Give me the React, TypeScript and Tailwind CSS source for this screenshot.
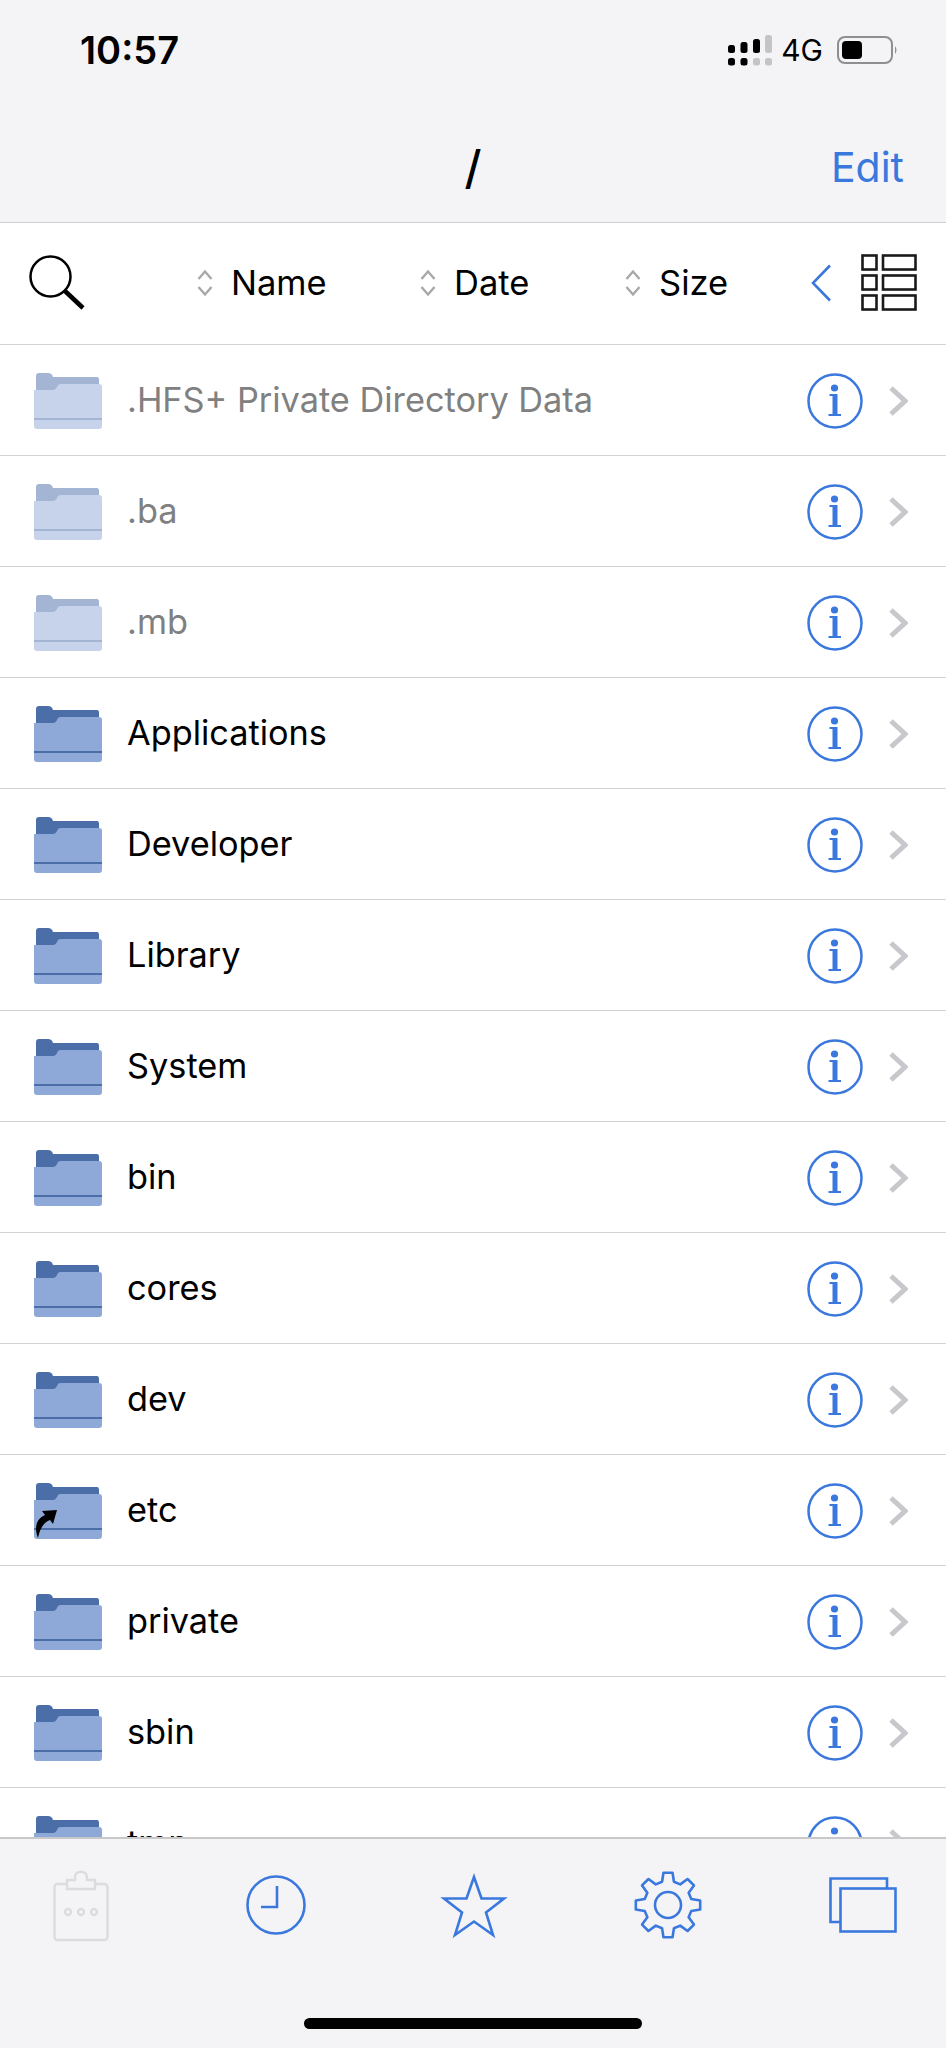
import React from "react";

const BLUE = "#3b78dd";

type Entry = { name: string; dim?: boolean; alias?: boolean };

const ENTRIES: Entry[] = [
  { name: ".HFS+ Private Directory Data", dim: true },
  { name: ".ba", dim: true },
  { name: ".mb", dim: true },
  { name: "Applications" },
  { name: "Developer" },
  { name: "Library" },
  { name: "System" },
  { name: "bin" },
  { name: "cores" },
  { name: "dev" },
  { name: "etc", alias: true },
  { name: "private" },
  { name: "sbin" },
  { name: "tmp" },
];

function FolderIcon({ dim, alias }: { dim?: boolean; alias?: boolean }) {
  return (
    <svg width="68" height="58" viewBox="0 0 68 58" className={dim ? "mt-[2px] shrink-0 opacity-50" : "mt-[2px] shrink-0"}>
      <path d="M2 3Q2 0 5 0H14Q18 0 19 4H63Q65 4 65 7V20H2Z" fill="#4c6ea8" />
      <path d="M0 17H19Q22 17 24 12Q25 11 27 11H65Q68 11 68 14V53Q68 56 65 56H3Q0 56 0 53Z" fill="#8ea9d8" />
      <rect x="0" y="45" width="68" height="2" fill="#4c6ea8" />
      {alias && <path d="M4 55C0 45 2 36 11 32L8 28L23 27L19 41L16 37C10 39 6 45 4 55Z" fill="#000" />}
    </svg>
  );
}

function InfoIcon() {
  return (
    <svg width="56" height="56" viewBox="0 0 56 56" className="shrink-0">
      <circle cx="28" cy="28" r="26.5" fill="none" stroke={BLUE} strokeWidth="2.5" />
      <circle cx="27.5" cy="15" r="3.6" fill={BLUE} />
      <path d="M22.5 21H30.5V41H34V43H21.5V41H25.5V23H22.5Z" fill={BLUE} />
    </svg>
  );
}

function Chevron() {
  return (
    <svg width="20" height="32" viewBox="0 0 20 32" className="shrink-0">
      <path d="M3 3L17 16L3 29" fill="none" stroke="#c8c8cc" strokeWidth="5" />
    </svg>
  );
}

function SortCaret() {
  return (
    <svg width="18" height="28" viewBox="0 0 18 28" className="shrink-0">
      <path d="M2.5 10L9 2.5L15.5 10M2.5 18L9 25.5L15.5 18" fill="none" stroke="#a8a8a8" strokeWidth="2.4" />
    </svg>
  );
}

function SortButton({ label, width }: { label: string; width: string }) {
  return (
    <div className={`flex items-center gap-[17px] ${width}`}>
      <SortCaret />
      <span className="mt-[2px] text-[34.5px] leading-none text-black">{label}</span>
    </div>
  );
}

function SearchIcon() {
  return (
    <svg width="56" height="56" viewBox="0 0 56 56" className="shrink-0">
      <circle cx="21.5" cy="21.5" r="20" fill="none" stroke="#000" strokeWidth="2.5" />
      <path d="M36 36L54 53" stroke="#000" strokeWidth="4.5" />
    </svg>
  );
}

function ListToggleIcon() {
  const rows = [1.5, 21.5, 41.5];
  return (
    <svg width="56" height="57" viewBox="0 0 56 57" className="shrink-0">
      {rows.map((y) => (
        <g key={y} fill="none" stroke="#1a1a1a" strokeWidth="2.6">
          <rect x="1.5" y={y} width="14" height="14" />
          <rect x="22" y={y} width="32.5" height="14" />
        </g>
      ))}
    </svg>
  );
}

function SignalIcon() {
  const top: [number, number][] = [[0, 10], [12.5, 7], [25, 4], [37, 0]];
  return (
    <svg width="44" height="31" viewBox="0 0 44 31" className="shrink-0">
      {top.map(([x, y], i) => (
        <rect key={x} x={x} y={y} width="7" height={18 - y} rx="2.5" fill={i === 3 ? "#c4c4c6" : "#000"} />
      ))}
      {top.map(([x], i) => (
        <rect key={x} x={x} y="23" width="7" height="7.5" rx="2.5" fill={i < 2 ? "#000" : "#c4c4c6"} />
      ))}
    </svg>
  );
}

function BatteryIcon() {
  return (
    <svg width="61" height="28" viewBox="0 0 61 28" className="shrink-0">
      <rect x="1" y="1" width="54" height="26" rx="7" fill="none" stroke="#8e8e90" strokeWidth="2" />
      <rect x="5" y="5" width="20" height="18" rx="4" fill="#000" />
      <path d="M58 10Q61 14 58 18Z" fill="#8e8e90" />
    </svg>
  );
}

function ClipboardIcon() {
  return (
    <svg width="56" height="74" viewBox="0 0 56 74" className="shrink-0" fill="none" stroke="#dcdcde" strokeWidth="2.4">
      <rect x="1.5" y="16" width="53" height="56" rx="3" />
      <path d="M14 21H42V12H34V9C34 2 22 2 22 9V12H14Z" fill="#f4f4f7" />
      <circle cx="15" cy="44" r="3" />
      <circle cx="28" cy="44" r="3" />
      <circle cx="41" cy="44" r="3" />
    </svg>
  );
}

function ClockIcon() {
  return (
    <svg width="60" height="60" viewBox="0 0 60 60" className="ml-[137px] shrink-0" fill="none" stroke={BLUE} strokeWidth="2.6">
      <circle cx="30" cy="30" r="28.5" />
      <path d="M31 11V32H15" />
    </svg>
  );
}

function StarIcon() {
  return (
    <svg width="68" height="66" viewBox="0 0 68 66" className="ml-[134px] mt-[1px] shrink-0">
      <path
        d="M34 4L41.5 25.5H64L46 39.5L53 62L34 48.5L15 62L22 39.5L4 25.5H26.5Z"
        fill="none"
        stroke={BLUE}
        strokeWidth="2.6"
      />
    </svg>
  );
}

// eight teeth, worked out around the centre
function gearPath(cx: number, cy: number, outer: number, root: number) {
  const pts: string[] = [];
  for (let i = 0; i < 8; i++) {
    const a = (i * Math.PI) / 4 - Math.PI / 2;
    const spots: [number, number][] = [
      [root, a - 0.25],
      [outer, a - 0.14],
      [outer, a + 0.14],
      [root, a + 0.25],
    ];
    spots.forEach(([r, t]) => pts.push(`${(cx + r * Math.cos(t)).toFixed(2)} ${(cy + r * Math.sin(t)).toFixed(2)}`));
  }
  return `M${pts.join("L")}Z`;
}

function GearIcon() {
  return (
    <svg width="70" height="70" viewBox="0 0 70 70" className="ml-[125px] shrink-0" fill="none" stroke={BLUE} strokeWidth="2.6">
      <path d={gearPath(35, 35, 32.5, 24)} strokeLinejoin="round" />
      <circle cx="35" cy="35" r="13" />
    </svg>
  );
}

function WindowsIcon() {
  return (
    <svg width="68" height="56" viewBox="0 0 68 56" className="ml-[126px] shrink-0" fill="none" stroke={BLUE} strokeWidth="2.6">
      <path d="M11 45H1.5V1.5H58V11" />
      <rect x="11.5" y="11.5" width="55" height="43" />
    </svg>
  );
}

function FileRow({ entry }: { entry: Entry }) {
  return (
    <div className="flex h-[111px] shrink-0 items-center border-b-[1.5px] border-[#d2d2d4] bg-white pl-[34px] pr-[38px] pt-[2px]">
      <FolderIcon dim={entry.dim} alias={entry.alias} />
      <span className={`mb-[2px] ml-[25px] flex-1 text-[34.3px] leading-none ${entry.dim ? "text-[#808080]" : "text-black"}`}>
        {entry.name}
      </span>
      <InfoIcon />
      <div className="ml-[25px]">
        <Chevron />
      </div>
    </div>
  );
}

export default function App() {
  return (
    <div className="flex h-[2048px] w-[946px] flex-col overflow-hidden bg-white font-['Inter',sans-serif]">
      <header className="shrink-0 border-b-[1.5px] border-[#cfcfd1] bg-[#f4f4f7]">
        <div className="flex h-[100px] items-center justify-between pl-[80px] pr-[48px]">
          <span className="text-[38px] font-semibold leading-none text-black">10:57</span>
          <div className="flex items-center">
            <SignalIcon />
            <span className="ml-[9px] mr-[14px] text-[30px] leading-none text-black">4G</span>
            <BatteryIcon />
          </div>
        </div>
        <div className="grid h-[122px] grid-cols-3 items-center pl-[42px] pr-[42px] pt-[12px]">
          <div />
          <div className="text-center text-[46px] font-medium leading-none text-black">/</div>
          <div className="text-right text-[41px] leading-none text-[#3b78dd]">Edit</div>
        </div>
      </header>

      <div className="flex h-[122px] shrink-0 items-center border-b-[1.5px] border-[#d2d2d4] pb-[2px] pl-[29px] pr-[29px]">
        <SearchIcon />
        <div className="ml-[111px] flex flex-1 items-center">
          <SortButton label="Name" width="w-[223px]" />
          <SortButton label="Date" width="w-[205px]" />
          <SortButton label="Size" width="w-[186px]" />
        </div>
        <svg width="22" height="38" viewBox="0 0 22 38" className="mr-[29px] shrink-0">
          <path d="M20 1.5L3 19L20 36.5" fill="none" stroke={BLUE} strokeWidth="2.6" />
        </svg>
        <ListToggleIcon />
      </div>

      <div className="flex min-h-0 flex-1 flex-col overflow-hidden">
        {ENTRIES.map((entry) => (
          <FileRow key={entry.name} entry={entry} />
        ))}
      </div>

      <footer className="flex h-[211px] shrink-0 flex-col border-t-[2px] border-[#c8c8ca] bg-[#f4f4f7]">
        <div className="flex items-center pl-[53px] pt-[29px]">
          <ClipboardIcon />
          <ClockIcon />
          <StarIcon />
          <GearIcon />
          <WindowsIcon />
        </div>
        <div className="mt-[76px] h-[11px] w-[338px] self-center rounded-full bg-black" />
      </footer>
    </div>
  );
}
